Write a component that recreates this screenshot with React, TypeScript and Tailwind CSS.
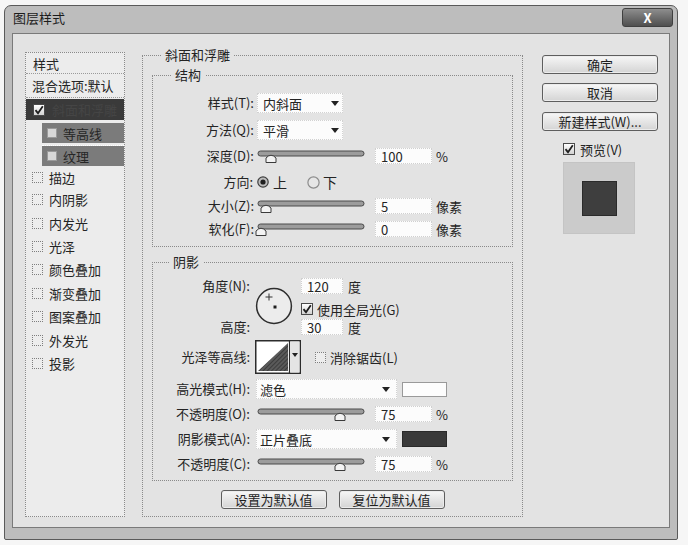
import React from "react";

const CheckOn = () => (
  <span className="flex h-[12px] w-[12px] shrink-0 items-center justify-center border border-[#4a4a4a] bg-linear-to-b from-[#ffffff] to-[#d2d2d2]">
    <svg width="10" height="10" viewBox="0 0 10 10">
      <path d="M1.5 5.2 L4 8.2 L8.8 1.2" fill="none" stroke="#1e1e1e" strokeWidth="1.8" />
    </svg>
  </span>
);

const CheckOff = () => (
  <span className="block h-[11px] w-[11px] shrink-0 border border-dotted border-[#7e7e7e] bg-[#ededed]" />
);

const RadioOn = () => (
  <svg width="12" height="12" viewBox="0 0 12 12" className="block shrink-0">
    <circle cx="6" cy="6" r="5.2" fill="#bdbdbd" stroke="#3e3e3e" strokeWidth="1.2" />
    <circle cx="6" cy="6" r="2.6" fill="#1f1f1f" />
  </svg>
);

const RadioOff = () => (
  <svg width="13" height="13" viewBox="0 0 13 13" className="block shrink-0">
    <circle cx="6.5" cy="6.5" r="5.6" fill="#e6e6e6" stroke="#8c8c8c" strokeWidth="1.2" />
  </svg>
);

const Arrow = () => (
  <svg width="8" height="5" viewBox="0 0 8 5" className="block shrink-0">
    <polygon points="0,0 8,0 4,5" fill="#222" />
  </svg>
);

function Slider({ pos }: { pos: number }) {
  return (
    <svg width="112" height="16" viewBox="0 0 112 16" className="block shrink-0">
      <rect x="3" y="3" width="106" height="5" rx="2.5" fill="#9c9c9c" stroke="#4a4a4a" strokeWidth="1" />
      <path
        d={`M${pos - 5} 14.5 L${pos - 5} 10 Q${pos} 4.5 ${pos + 5} 10 L${pos + 5} 14.5 Z`}
        fill="#f3f3f3"
        stroke="#3a3a3a"
        strokeWidth="1"
      />
    </svg>
  );
}

const Input = ({ v }: { v: string }) => (
  <div className="flex h-[16px] w-[57px] shrink-0 items-center border border-dotted border-[#d0d0d0] bg-[#fcfcfc] pl-[5px] text-[13px] leading-none">
    {v}
  </div>
);

const SmallInput = ({ v }: { v: string }) => (
  <div className="flex h-[16px] w-[42px] shrink-0 items-center border border-dotted border-[#d0d0d0] bg-[#fcfcfc] pl-[5px] text-[13px] leading-none">
    {v}
  </div>
);

const Btn = ({ children, extra }: { children: React.ReactNode; extra: string }) => (
  <div
    className={
      "flex h-[19px] shrink-0 items-center justify-center rounded-[3px] border border-[#5e5e5e] bg-linear-to-b from-[#f7f7f7] to-[#d4d4d4] text-[13px] leading-none text-[#1e1e1e] shadow-[inset_0_0_0_1px_#ececec] " +
      extra
    }
  >
    {children}
  </div>
);

const Label = ({ children, w }: { children: React.ReactNode; w: string }) => (
  <div className={"shrink-0 text-right text-[13px] leading-[16px] " + w}>{children}</div>
);

const ContourIcon = () => (
  <svg width="46" height="34" viewBox="0 0 46 34" className="block shrink-0">
    <defs>
      <pattern id="hatch" width="3" height="3" patternUnits="userSpaceOnUse" patternTransform="rotate(45)">
        <rect width="3" height="3" fill="#5a5a5a" />
        <line x1="0" y1="0" x2="0" y2="3" stroke="#2e2e2e" strokeWidth="1.4" />
      </pattern>
    </defs>
    <rect x="0.75" y="0.75" width="44.5" height="32.5" fill="#ffffff" stroke="#2c2c2c" strokeWidth="1.5" />
    <polygon points="3,31 33,3 33,31" fill="url(#hatch)" />
    <line x1="34.5" y1="1" x2="34.5" y2="33" stroke="#2c2c2c" strokeWidth="1.2" />
    <rect x="35.2" y="1.5" width="9.3" height="31" fill="#e4e4e4" />
    <polygon points="37,13 43,13 40,17" fill="#222" />
  </svg>
);

const AngleIcon = () => (
  <svg width="38" height="38" viewBox="0 0 38 38" className="block shrink-0">
    <circle cx="19" cy="19" r="17.4" fill="#ececec" stroke="#2e2e2e" strokeWidth="1.5" />
    <line x1="14" y1="6.5" x2="14" y2="13.5" stroke="#333" strokeWidth="1" />
    <line x1="10.5" y1="10" x2="17.5" y2="10" stroke="#333" strokeWidth="1" />
    <rect x="18.5" y="18.5" width="3" height="3" fill="#1e1e1e" />
  </svg>
);

const items = ["内阴影", "内发光", "光泽", "颜色叠加", "渐变叠加", "图案叠加", "外发光", "投影"];

export default function App() {
  return (
    <div className="h-[545px] w-[688px] overflow-hidden bg-[#f6f6f6] pl-[4px] pt-[5px] font-['Noto_Sans_CJK_SC','Noto_Sans',sans-serif] text-[#242424]">
      <div className="flex h-[535px] w-[674px] flex-col rounded-t-[7px] rounded-b-[2px] border border-[#5a5a5a] bg-[#bdbdbd] px-[7px] pb-[11px]">
        {/* title bar */}
        <div className="flex h-[27px] shrink-0 items-start justify-between pt-[2px]">
          <div className="ml-[1px] mt-[1px] text-[13px] leading-[18px] text-[#1c1c1c]">图层样式</div>
          <div className="-mr-[3px] flex h-[19px] w-[51px] items-center justify-center rounded-[3px] border border-[#404040] bg-linear-to-b from-[#8e8e8e] to-[#4f4f4f] text-[13px] font-bold leading-none text-white">
            X
          </div>
        </div>

        {/* content */}
        <div className="flex h-[495px] shrink-0 items-start border border-[#7a7a7a] bg-[#e3e3e3] pl-[12px] pt-[18px]">
          {/* left list */}
          <div className="flex h-[465px] w-[100px] shrink-0 flex-col border border-dotted border-[#8a8a8a] bg-[#ececec] text-[13px]">
            <div className="flex h-[21px] shrink-0 items-center border-b border-dotted border-[#9a9a9a] pl-[7px] leading-none">
              样式
            </div>
            <div className="flex h-[24px] shrink-0 items-center border-b border-dotted border-[#9a9a9a] pl-[6px] leading-none">
              混合选项:默认
            </div>
            <div className="mt-[1px] flex h-[21px] shrink-0 items-center bg-[#3a3a3a] pl-[7px]">
              <CheckOn />
              <span className="ml-[7px] leading-none text-[#454545]">斜面和浮雕</span>
            </div>
            <div className="ml-[16px] mt-[3px] flex h-[20px] shrink-0 items-center bg-[#7b7b7b] pl-[5px]">
              <span className="block h-[10px] w-[10px] border border-[#9a9a9a] bg-[#d8d8d8]" />
              <span className="ml-[6px] leading-none text-[#262626]">等高线</span>
            </div>
            <div className="ml-[16px] h-[3px] shrink-0 border-b border-dotted border-[#ffffff]" />
            <div className="ml-[16px] flex h-[20px] shrink-0 items-center bg-[#7b7b7b] pl-[5px]">
              <span className="block h-[10px] w-[10px] border border-[#9a9a9a] bg-[#d8d8d8]" />
              <span className="ml-[6px] leading-none text-[#262626]">纹理</span>
            </div>
            <div className="flex h-[22px] shrink-0 items-center pl-[6px]">
              <CheckOff />
              <span className="ml-[6px] leading-none">描边</span>
            </div>
            {items.map((t) => (
              <div key={t} className="flex h-[23.4px] shrink-0 items-center pl-[6px]">
                <CheckOff />
                <span className="ml-[6px] leading-none">{t}</span>
              </div>
            ))}
          </div>

          {/* middle: bevel & emboss */}
          <div className="relative ml-[17px] mt-[3px] flex h-[462px] w-[381px] shrink-0 flex-col border border-dotted border-[#8a8a8a]">
            <span className="absolute -top-[10px] left-[18px] bg-[#e3e3e3] px-[4px] text-[13px] leading-[18px]">斜面和浮雕</span>

            {/* structure */}
            <div className="relative ml-[9px] mt-[19px] flex h-[172px] w-[361px] shrink-0 flex-col border border-dotted border-[#8a8a8a] pt-[17px]">
              <span className="absolute -top-[10px] left-[18px] bg-[#e3e3e3] px-[4px] text-[13px] leading-[18px]">结构</span>

              <div className="flex h-[20px] items-center">
                <Label w="w-[101px]">样式(T):</Label>
                <div className="ml-[3px] flex h-[20px] w-[86px] items-center justify-between border border-dotted border-[#d2d2d2] bg-[#fcfcfc] pl-[5px] pr-[3px] text-[13px] leading-none">
                  <span>内斜面</span>
                  <Arrow />
                </div>
              </div>
              <div className="mt-[7px] flex h-[20px] items-center">
                <Label w="w-[101px]">方法(Q):</Label>
                <div className="ml-[3px] flex h-[20px] w-[86px] items-center justify-between border border-dotted border-[#d2d2d2] bg-[#fcfcfc] pl-[5px] pr-[3px] text-[13px] leading-none">
                  <span>平滑</span>
                  <Arrow />
                </div>
              </div>
              <div className="mt-[8px] flex h-[16px] items-center">
                <Label w="w-[101px]">深度(D):</Label>
                <span className="ml-[1px] flex">
                  <Slider pos={16} />
                </span>
                <span className="ml-[8px] flex">
                  <Input v="100" />
                </span>
                <span className="ml-[4px] text-[13px] leading-none">%</span>
              </div>
              <div className="mt-[9px] flex h-[18px] items-center">
                <Label w="w-[100px]">方向:</Label>
                <span className="ml-[4px] flex">
                  <RadioOn />
                </span>
                <span className="ml-[4px] text-[14px] leading-none">上</span>
                <span className="ml-[20px] flex">
                  <RadioOff />
                </span>
                <span className="ml-[3px] text-[14px] leading-none">下</span>
              </div>
              <div className="mt-[7px] flex h-[16px] items-center">
                <Label w="w-[101px]">大小(Z):</Label>
                <span className="ml-[1px] flex">
                  <Slider pos={11} />
                </span>
                <span className="ml-[8px] flex">
                  <Input v="5" />
                </span>
                <span className="ml-[4px] text-[13px] leading-none">像素</span>
              </div>
              <div className="mt-[7px] flex h-[16px] items-center">
                <Label w="w-[101px]">软化(F):</Label>
                <span className="ml-[1px] flex">
                  <Slider pos={6} />
                </span>
                <span className="ml-[8px] flex">
                  <Input v="0" />
                </span>
                <span className="ml-[4px] text-[13px] leading-none">像素</span>
              </div>
            </div>

            {/* shading */}
            <div className="relative ml-[9px] mt-[15px] flex h-[219px] w-[361px] shrink-0 flex-col border border-dotted border-[#8a8a8a] pt-[15px]">
              <span className="absolute -top-[10px] left-[16px] bg-[#e3e3e3] px-[4px] text-[13px] leading-[18px]">阴影</span>

              <div className="flex h-[57px] items-start">
                <div className="flex h-[57px] w-[97px] shrink-0 flex-col items-end justify-between text-[13px] leading-[16px]">
                  <span>角度(N):</span>
                  <span>高度:</span>
                </div>
                <div className="ml-[5px] pt-[9px]">
                  <AngleIcon />
                </div>
                <div className="ml-[8px] flex flex-col">
                  <div className="flex h-[16px] items-center">
                    <SmallInput v="120" />
                    <span className="ml-[5px] text-[13px] leading-none">度</span>
                  </div>
                  <div className="mt-[9px] flex h-[12px] items-center">
                    <CheckOn />
                    <span className="ml-[4px] text-[13px] leading-none">使用全局光(G)</span>
                  </div>
                  <div className="mt-[4px] flex h-[16px] items-center">
                    <SmallInput v="30" />
                    <span className="ml-[5px] text-[13px] leading-none">度</span>
                  </div>
                </div>
              </div>

              <div className="mt-[5px] flex h-[34px] items-center">
                <Label w="w-[97px]">光泽等高线:</Label>
                <span className="ml-[5px] flex">
                  <ContourIcon />
                </span>
                <span className="ml-[14px] flex">
                  <CheckOff />
                </span>
                <span className="ml-[4px] text-[13px] leading-none">消除锯齿(L)</span>
              </div>

              <div className="mt-[5px] flex h-[20px] items-center">
                <Label w="w-[97px]">高光模式(H):</Label>
                <div className="ml-[6px] flex h-[20px] w-[141px] shrink-0 items-center justify-between border border-dotted border-[#d2d2d2] bg-[#fcfcfc] pl-[3px] pr-[6px] text-[13px] leading-none">
                  <span>滤色</span>
                  <Arrow />
                </div>
                <div className="ml-[5px] h-[15px] w-[45px] shrink-0 border border-[#9a9a9a] bg-[#fdfdfd]" />
              </div>

              <div className="mt-[7px] flex h-[16px] items-center">
                <Label w="w-[97px]">不透明度(O):</Label>
                <span className="ml-[5px] flex">
                  <Slider pos={85} />
                </span>
                <span className="ml-[8px] flex">
                  <Input v="75" />
                </span>
                <span className="ml-[4px] text-[13px] leading-none">%</span>
              </div>

              <div className="mt-[7px] flex h-[20px] items-center">
                <Label w="w-[97px]">阴影模式(A):</Label>
                <div className="ml-[6px] flex h-[20px] w-[141px] shrink-0 items-center justify-between border border-dotted border-[#d2d2d2] bg-[#fcfcfc] pl-[3px] pr-[6px] text-[13px] leading-none">
                  <span>正片叠底</span>
                  <Arrow />
                </div>
                <div className="ml-[5px] h-[16px] w-[45px] shrink-0 border border-[#2a2a2a] bg-[#3a3a3a]" />
              </div>

              <div className="mt-[7px] flex h-[16px] items-center">
                <Label w="w-[97px]">不透明度(C):</Label>
                <span className="ml-[5px] flex">
                  <Slider pos={85} />
                </span>
                <span className="ml-[8px] flex">
                  <Input v="75" />
                </span>
                <span className="ml-[4px] text-[13px] leading-none">%</span>
              </div>
            </div>

            <div className="mt-[9px] flex justify-center gap-[12px]">
              <Btn extra="w-[106px]">设置为默认值</Btn>
              <Btn extra="w-[106px]">复位为默认值</Btn>
            </div>
          </div>

          {/* right column */}
          <div className="ml-[19px] mt-[3px] flex w-[116px] shrink-0 flex-col">
            <Btn extra="w-[116px]">确定</Btn>
            <Btn extra="mt-[9px] w-[116px]">取消</Btn>
            <Btn extra="mt-[10px] w-[116px]">新建样式(W)...</Btn>
            <div className="ml-[21px] mt-[12px] flex h-[12px] items-center">
              <CheckOn />
              <span className="ml-[5px] text-[13px] leading-none">预览(V)</span>
            </div>
            <div className="ml-[21px] mt-[7px] flex h-[72px] w-[72px] items-center justify-center border border-[#c4c4c4] bg-[#cbcbcb]">
              <div className="h-[35px] w-[35px] border border-[#2a2a2a] bg-[#3e3e3e]" />
            </div>
          </div>
        </div>
      </div>
    </div>
  );
}
